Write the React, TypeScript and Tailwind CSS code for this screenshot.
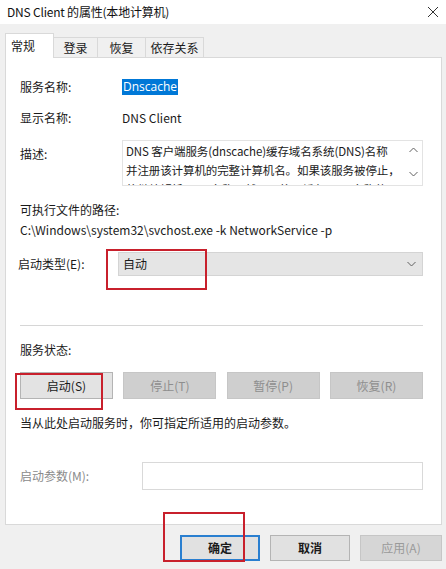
import React from "react";

const font = { fontFamily: '"Noto Sans CJK SC", "Noto Sans", sans-serif' };

function Chevron({ up }: { up?: boolean }) {
  return (
    <svg width="9" height="6" viewBox="0 0 9 6" className="block">
      <path
        d={up ? "M0.5 5 L4.5 1 L8.5 5" : "M0.5 1 L4.5 5 L8.5 1"}
        fill="none"
        stroke="#606060"
        strokeWidth="1"
      />
    </svg>
  );
}

export default function App() {
  return (
    <div
      className="relative w-[446px] h-[569px] bg-[#f0f0f0] text-[12px] text-[#1a1a1a] overflow-hidden"
      style={font}
    >
      {/* Title bar */}
      <div className="h-[24px] bg-white flex items-center justify-between pl-[7px] pr-[7px]">
        <span className="text-[12px] leading-none text-[#111] tracking-[-0.2px]">DNS Client 的属性(本地计算机)</span>
        <svg width="12" height="12" viewBox="0 0 12 12">
          <path d="M1 1 L11 11 M11 1 L1 11" stroke="#333" strokeWidth="1" />
        </svg>
      </div>

      <div className="pl-[5px] pr-[4px] pt-[9px]">
        {/* Tabs */}
        <div className="flex items-end h-[24px] relative z-10">
          <div className="h-[25px] w-[49px] bg-white border border-b-0 border-[#d9d9d9] flex items-center pl-[5px] text-[12px] mb-[-1px]">
            常规
          </div>
          <div className="h-[20px] w-[44px] bg-[#f0f0f0] border border-l-0 border-b-0 border-[#d9d9d9] flex items-center justify-center">
            登录
          </div>
          <div className="h-[20px] w-[48px] bg-[#f0f0f0] border border-l-0 border-b-0 border-[#d9d9d9] flex items-center justify-center">
            恢复
          </div>
          <div className="h-[20px] w-[58px] bg-[#f0f0f0] border border-l-0 border-b-0 border-[#d9d9d9] flex items-center justify-center">
            依存关系
          </div>
        </div>

        {/* Panel */}
        <div className="h-[468px] bg-white border border-[#d9d9d9] pl-[14px] pr-[18px] flex flex-col">
          <div className="h-[20px] mt-[19px] flex items-center">
            <span className="w-[102px]">服务名称:</span>
            <span className="bg-[#0078d7] text-white px-[1px] leading-[16px]" style={{ fontFamily: '"Open Sans", "Noto Sans", sans-serif' }}>
              Dnscache
            </span>
          </div>
          <div className="h-[20px] mt-[11px] flex items-center">
            <span className="w-[102px]">显示名称:</span>
            <span>DNS Client</span>
          </div>
          <div className="h-[46px] mt-[12px] flex">
            <span className="w-[102px] pt-[5px]">描述:</span>
            <div className="flex-1 border border-[#e3e3e3] flex overflow-hidden">
              <div className="flex-1 pl-[3px] pt-[1px] text-[11.5px] leading-[19px] overflow-hidden whitespace-nowrap tracking-[-0.1px]">
                <div>DNS 客户端服务(dnscache)缓存域名系统(DNS)名称</div>
                <div>并注册该计算机的完整计算机名。如果该服务被停止，</div>
                <div>将继续解析 DNS 名称。然而，将不缓存 DNS 名称的</div>
              </div>
              <div className="w-[18px] flex flex-col items-center justify-between pt-[6px] pb-[8px]">
                <Chevron up />
                <Chevron />
              </div>
            </div>
          </div>
          <div className="h-[20px] mt-[14px] flex items-center">可执行文件的路径:</div>
          <div className="h-[20px] flex items-center">C:\Windows\system32\svchost.exe -k NetworkService -p</div>
          <div className="h-[24px] mt-[12px] flex items-center">
            <span className="w-[100px] -ml-[2px]">启动类型(E):</span>
            <div className="flex-1 h-[24px] bg-[#e5e5e5] border border-[#d4d4d4] flex items-center justify-between pl-[4px] pr-[6px]">
              <span>自动</span>
              <Chevron />
            </div>
          </div>
          <div className="h-[1px] bg-[#d6d6d6] mt-[49px]" />
          <div className="h-[20px] mt-[14px] flex items-center">服务状态:</div>
          <div className="h-[27px] mt-[12px] flex justify-between">
            <div className="w-[93px] bg-[#e3e3e3] border border-[#b4b4b4] flex items-center justify-center">启动(S)</div>
            <div className="w-[93px] bg-[#cfcfcf] border border-[#c6c6c6] flex items-center justify-center text-[#8e8e8e]">停止(T)</div>
            <div className="w-[93px] bg-[#cfcfcf] border border-[#c6c6c6] flex items-center justify-center text-[#8e8e8e]">暂停(P)</div>
            <div className="w-[93px] bg-[#cfcfcf] border border-[#c6c6c6] flex items-center justify-center text-[#8e8e8e]">恢复(R)</div>
          </div>
          <div className="h-[20px] mt-[14px] flex items-center">当从此处启动服务时，你可指定所适用的启动参数。</div>
          <div className="h-[28px] mt-[29px] flex items-center">
            <span className="w-[122px] text-[#8a8a8a]">启动参数(M):</span>
            <div className="flex-1 h-[28px] border border-[#d9d9d9] bg-white" />
          </div>
        </div>

        {/* Footer buttons */}
        <div className="flex h-[26px] mt-[10px] pl-[175px] gap-[10px]">
          <div className="w-[82px] bg-[#e1e1e1] border-2 border-[#2a7fd0] flex items-center justify-center font-bold">确定</div>
          <div className="w-[82px] bg-[#e1e1e1] border border-[#b4b4b4] flex items-center justify-center font-bold">取消</div>
          <div className="w-[84px] bg-[#d6d6d6] border border-[#c6c6c6] flex items-center justify-center text-[#9a9a9a]">应用(A)</div>
        </div>
      </div>

      {/* Red annotation boxes (overlays) */}
      <div className="absolute left-[106px] top-[249px] w-[101px] h-[41px] border-2 border-[#c8202c]" />
      <div className="absolute left-[15px] top-[373px] w-[88px] h-[37px] border-2 border-[#c8202c]" />
      <div className="absolute left-[163px] top-[512px] w-[82px] h-[50px] border-2 border-[#c8202c]" />
    </div>
  );
}
